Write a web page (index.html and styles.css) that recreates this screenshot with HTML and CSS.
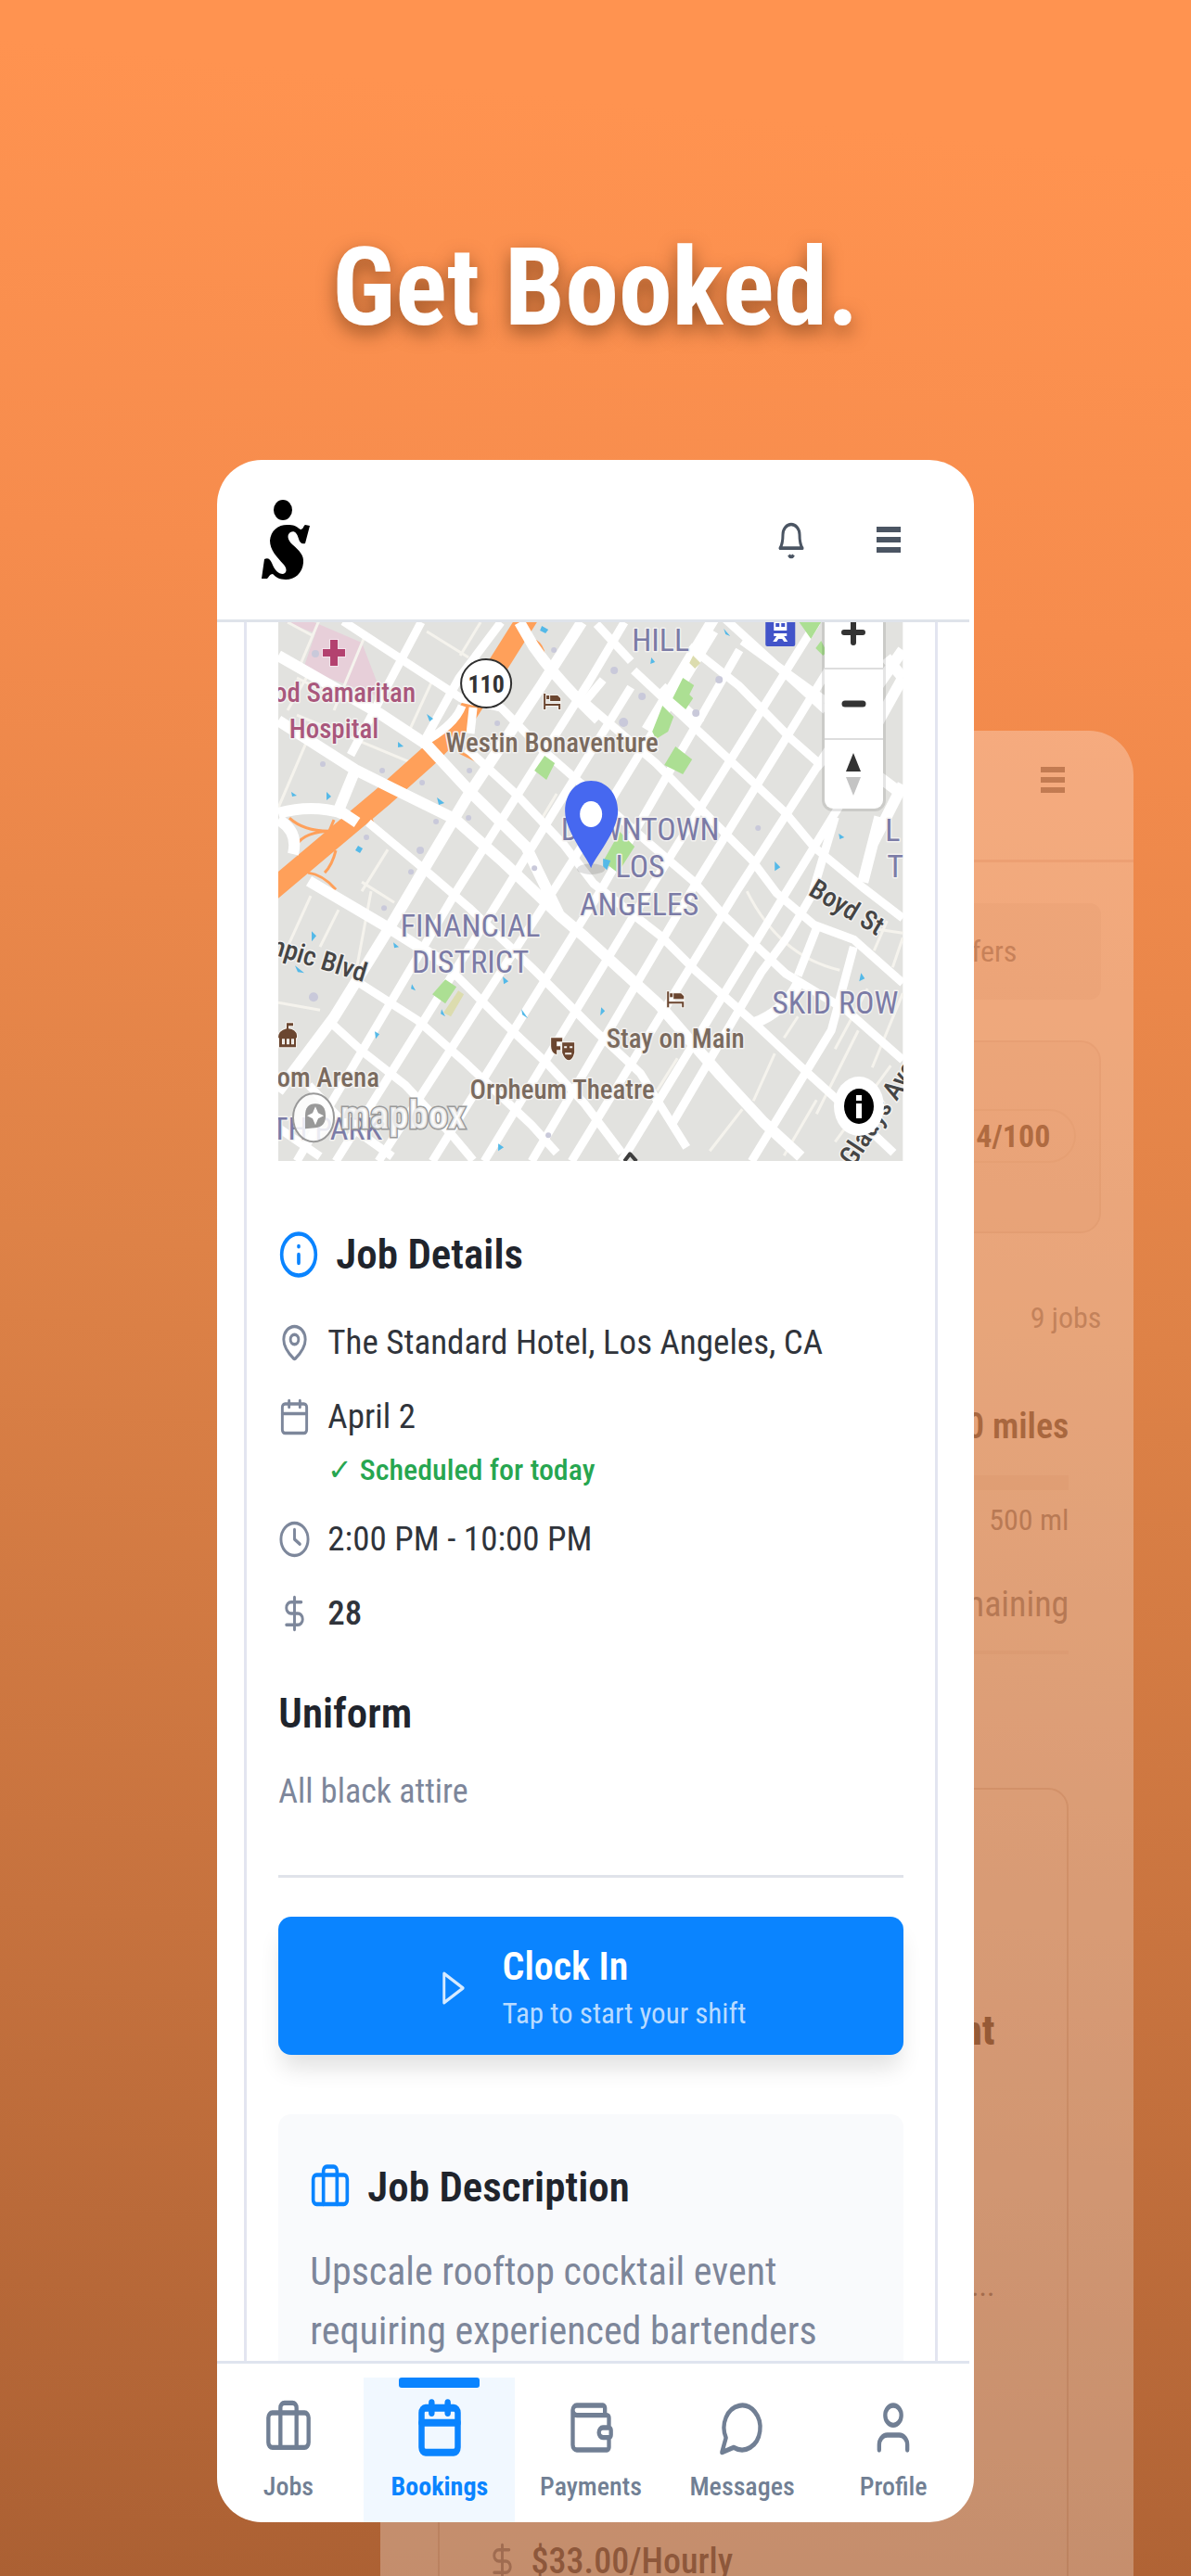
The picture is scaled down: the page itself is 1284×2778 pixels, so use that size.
FILE: index.html
```html
<!DOCTYPE html>
<html lang="en">
<head>
<meta charset="utf-8">
<meta name="viewport" content="width=device-width, initial-scale=1">
<title>Get Booked.</title>
<link rel="stylesheet" href="styles.css">
</head>
<body>
<svg class="defs" aria-hidden="true">
  <symbol id="i-briefcase" viewBox="0 0 24 24" preserveAspectRatio="none"><path d="M16 20V4a2 2 0 0 0-2-2h-4a2 2 0 0 0-2 2v16"/><rect x="2" y="6" width="20" height="14" rx="2"/></symbol>
  <symbol id="i-calendar" viewBox="0 0 24 24" preserveAspectRatio="none"><path d="M8 2v4M16 2v4M3 10h18"/><rect x="3" y="4" width="18" height="18" rx="2"/></symbol>
  <symbol id="i-dollar" viewBox="0 0 24 24" preserveAspectRatio="none"><path d="M12 2v20M17 5H9.500a3.500 3.500 0 0 0 0 7h5a3.500 3.500 0 0 1 0 7H6"/></symbol>
</svg>

<main class="promo">
  <h1 class="promo-title">Get Booked.</h1>

  <section class="back-screen" aria-hidden="true">
    <div class="back-header"><span class="bars"><i></i><i></i><i></i></span></div>
    <div class="back-body">
      <div class="back-tab">Offers</div>
      <div class="back-box"><span class="back-pill">14/100</span></div>
      <p class="back-count">9 jobs</p>
      <div class="back-range">
        <p class="back-strong">50 miles</p>
        <div class="back-track"></div>
        <p class="back-max">500 ml</p>
        <p class="back-left">remaining</p>
        <div class="back-rule"></div>
        <div class="back-job">
          <p class="back-job-title">Event</p>
          <p class="back-job-note">Downtown venue...</p>
          <p class="back-job-rate"><svg class="icon icon-md"><use href="#i-dollar"/></svg><span>$33.00/Hourly</span></p>
        </div>
      </div>
    </div>
  </section>

  <section class="phone">
    <div class="screen">
      <header class="top-bar">
        <a class="logo" href="#" aria-label="Home">
          <svg width="52" height="88" viewBox="0 0 52 88"><ellipse cx="23" cy="12" rx="10" ry="11"/><path d="M52 29L47 48C43 49 41 47 40 43C38 36 35 34 31 36C27 39 28 44 33 49C41 56 46 61 45 69C44 80 36 87 26 87C19 87 15 84 12 81C9 81 8 84 6 86H0L3 65C7 63 9 65 11 69C14 77 18 81 23 81C27 80 28 76 24 71C16 62 9 55 9 45C10 33 19 27 30 28C36 28 39 31 42 33C45 33 45 29 47 28Z"/></svg>
        </a>
        <div class="top-actions">
          <button class="plain" type="button" aria-label="Notifications"><svg class="bell" viewBox="0 0 24 24" preserveAspectRatio="none"><path d="M10.300 21a1.940 1.940 0 0 0 3.400 0M4 17h16c-1.500-2-2-4-2-8a6 6 0 0 0-12 0c0 4-.5 6-2 8z"/></svg></button>
          <button class="plain" type="button" aria-label="Menu"><span class="bars"><i></i><i></i><i></i></span></button>
        </div>
      </header>

      <div class="content">
        <article class="booking">
          <div class="map">
            <svg class="map-art" viewBox="0 0 673 581" role="img" aria-label="Map of downtown Los Angeles">
              <rect width="673" height="581" fill="#e2e2df"/>
              <path d="M8 0L40 12L27 50L113 82L90 22L34 -2z" fill="#e7cfd9"/>
              <g class="minor">
                <path d="M10 0L36 14M44 -2L22 50M92 18L60 95M36 50L10 95M160 10L205 38M218 0L196 36M165 65L142 115M60 80L20 60M20 100L145 152M30 130L0 200M118 245L90 290M100 290L85 370M35 295L10 350M90 280L125 302M65 310L45 350M0 410L45 418M300 185L282 215"/>
                <path d="M505 290Q540 360 605 375M640 330L673 335M656 322L642 354M560 425L545 448M535 465L512 516M500 525L465 570M635 395L600 460M625 440L580 530M673 400L640 480M660 478L600 560M545 575L580 515M673 340L662 372M430 470L408 505"/>
              </g>
              <g class="freeway">
                <path class="ramp" d="M12 211Q28 226 58 225M20 240Q28 226 58 225M60 213L55 225M62 246Q58 262 50 270M32 270Q48 272 62 288M100 212L104 222M195 140L217 151M277 20Q285 25 286 35"/>
                <path class="trunk" d="M-8 290L113 188L162 144L196 110L218 76L272 -10"/>
              </g>
              <g class="road">
                <path d="M343 2L380 42M443 26L497 69L553 126L587 156M383 52L430 96L490 152L547 206L577 242L630 286L673 319M330 86L407 152L460 206L510 256L537 292L577 326L620 342L673 389"/>
                <path d="M70 -1L197 82L240 92L283 136L340 186L397 236L447 279L480 316L547 379L613 419L673 472M203 136L257 186L307 239L340 282L413 339L450 376L513 432L563 479L607 519L663 572"/>
                <path class="wide" d="M0 36L110 99L160 132L210 186L267 242L303 316M0 106L83 159L123 179L190 212L243 259L303 316L330 339L410 412L477 489L523 539L563 576"/>
                <path d="M97 216L157 266L207 309L277 376L340 439L390 486L440 566M177 366L237 426L290 476L330 519L370 572M83 386L150 429L203 476L273 542L300 572M57 432L90 462L137 499L190 556L210 580M33 499L67 536L123 576M0 545L45 576M350 62L330 86M210 92L207 120"/>
                <path class="wide" d="M33 279L123 332L177 366M0 506L60 426L120 329L163 256L203 189L283 69L327 0M260 0L275 26Q300 62 345 105M0 206Q35 196 70 206L85 216M0 213Q22 225 16 250M83 159L62 210"/>
                <path d="M154 0L78 143M240 0L195 60L155 132M198 90Q190 112 152 132M20 581L192 290L335 64L373 0M62 581L244 290L380 70M108 581L296 290L350 206L470 10M166 581L347 290L497 30M222 581L399 290L520 96L580 0M273 581L445 290L560 104L597 44M316 581L494 290L600 126M370 581L548 290L625 165M425 540L520 378L548 340L575 294L600 210M510 581L596 440L620 350M560 381L580 330"/>
                <path class="wide" d="M397 116L470 -5M413 70L455 110M560 390Q545 420 513 432M673 30L645 70M645 165L673 186M655 38L673 60M645 110L673 60M630 280L648 210M673 175L640 240"/>
                <path d="M480 -5L590 95M500 20L590 85"/>
              </g>
              <g fill="#acdf93"><path d="M287 144l11 8-9 18-13-10zM436 60l12 8-5 10 4 4-8 12-14-12zM414 90l12 12-6 16-13 8-4-8zM428 134l18 14-10 16-20-10zM368 226l16 16-18 28-16-12zM560 -2h26l-12 20zM585 20l6 12-4 4-8-8zM180 385l12 8-12 18-14-10z"/></g>
              <g fill="#dcdcae"><path d="M194 397l6 4-14 24-8-4zM447 36l8 8-6 6-6-6z"/></g>
              <g fill="#54b9e8"><path d="M284 4l7 4-3 4-6-3zM160 99l7 5-4 3zM129 129l6 5-6 1zM171 189l8 6-6 2zM52 183l5 5-5 4zM86 241l5 3-3 5-5-3zM14 183l6 4-5 1zM535 258l6 6-6 4zM604 228l6 4-5 2zM628 378l4 6-6 3zM402 38l4 5-5 2zM480 7l7 8-5-2zM350 255l8 2-4 10-4-4zM36 333l5 5-5 6zM18 370l10 8-7-1zM124 345l6 5-5 1zM144 390l4 7-5-2zM242 382l6 5-5 3zM262 417l7 10-6-4zM104 441l5 3-4 5zM237 562l6 4-6 4zM348 415l4 4-5 5zM435 392l6 6zM176 417l4 8-5-3z"/></g>
              <g fill="#c9c9da"><circle cx="40" cy="34" r="4"/><circle cx="112" cy="160" r="3"/><circle cx="48" cy="153" r="3"/><circle cx="155" cy="173" r="3"/><circle cx="206" cy="160" r="3"/><circle cx="236" cy="109" r="3"/><circle cx="297" cy="30" r="3"/><circle cx="170" cy="215" r="3"/><circle cx="205" cy="211" r="3"/><circle cx="153" cy="246" r="4"/><circle cx="143" cy="269" r="3"/><circle cx="276" cy="265" r="3"/><circle cx="95" cy="232" r="3"/><circle cx="475" cy="62" r="4"/><circle cx="362" cy="52" r="4"/><circle cx="392" cy="80" r="4"/><circle cx="372" cy="108" r="5"/><circle cx="450" cy="98" r="4"/><circle cx="517" cy="222" r="3"/><circle cx="291" cy="553" r="3"/><circle cx="114" cy="308" r="3"/><circle cx="38" cy="404" r="5"/></g>

              <rect x="525" y="-6" width="32" height="32" rx="2" fill="#4254c9"/>
              <path d="M534 -4h14v13h-14zM534 12h14v3h-3l4 6h-4l-2-3h-4l-2 3h-4l4-6h-3z" fill="#fff"/><path d="M536 1h4v4h-4zM542 1h4v4h-4z" fill="#4254c9"/>
              <path d="M56 19h8v10h8v8h-8v10h-8V37h-8v-8h8z" fill="#b3416f" stroke="#f4e4ec" stroke-width="2" paint-order="stroke"/>
              <ellipse cx="224" cy="66" rx="27" ry="26" fill="#fff" stroke="#2f2f2f" stroke-width="2"/>
              <text x="224" y="76" class="shield">110</text>
              <g class="poi">
                <path d="M286 77h2v11h16v-6l-3-3h-8v6h11v9h-2v-4h-14v4h-2zM289 79h3v4h-3z"/>
                <path d="M419 398h2v11h16v-6l-3-3h-8v6h11v9h-2v-4h-14v4h-2zM422 400h3v4h-3z"/>
                <path d="M294 448h12v4h-6v5h4v4h-4v5q-6-2-6-9zM306 453h13v11q-2 8-6 8t-7-8zM308 457v2h3v-2zM314 457v2h3v-2zM309 464v2h7v-2z" fill-rule="evenodd"/>
                <path d="M9 432h7v3h-5v3q8 1 9 7v3h-1v10H1V448H0q0-8 9-10zM4 449v6h3v-6zM9 449v6h3v-6zM14 449v6h3v-6z" fill-rule="evenodd"/>
              </g>
              <g class="hospital"><text x="148" y="86" text-anchor="end">Good Samaritan</text><text x="60" y="125" text-anchor="middle">Hospital</text></g>
              <g class="place">
                <text x="295" y="140" text-anchor="middle">Westin Bonaventure</text>
                <text x="428" y="459" text-anchor="middle">Stay on Main</text>
                <text x="306" y="514" text-anchor="middle">Orpheum Theatre</text>
                <text x="109" y="501" text-anchor="end">Crypto.com Arena</text>
              </g>
              <g class="district">
                <text x="412" y="31" text-anchor="middle">HILL</text>
                <text x="390" y="235" text-anchor="middle">DOWNTOWN</text>
                <text x="390" y="275" text-anchor="middle">LOS</text>
                <text x="389" y="316" text-anchor="middle">ANGELES</text>
                <text x="207" y="339" text-anchor="middle">FINANCIAL</text>
                <text x="207" y="378" text-anchor="middle">DISTRICT</text>
                <text x="600" y="422" text-anchor="middle">SKID ROW</text>
                <text x="654" y="236">L</text>
                <text x="656" y="275">T</text>
                <text x="112" y="558" text-anchor="end">TH PARK</text>
              </g>
              <g class="street">
                <text transform="translate(570 293) rotate(31)">Boyd St</text>
                <text transform="translate(92 388) rotate(17)" text-anchor="end">Olympic Blvd</text>
                <text transform="translate(620 588) rotate(-57)">Gladys Ave</text>
                <path d="M373 581l6-8 7 8" fill="none" stroke="#3d3d3d" stroke-width="4"/>
              </g>
              <ellipse cx="337" cy="266" rx="15" ry="6" fill="#000" opacity=".12"/>
              <path d="M337 265C333 254 309 225 309 204C309 184 321 171 337 171S366 184 366 204C366 225 341 254 337 265Z" fill="#4668f0"/>
              <ellipse cx="337" cy="207" rx="12" ry="14" fill="#fff"/>
              <g class="mapbox">
                <ellipse cx="38" cy="534" rx="22" ry="26" fill="#fff" fill-opacity=".85" stroke="#999" stroke-width="2"/>
                <path d="M29 546V532q0-13 11-13t11 13q0 12-11 13z" fill="#999"/><path d="M40 522l3 7 6 3-6 3-3 7-3-7-6-3 6-3z" fill="#fff"/>
                <text x="67" y="546">mapbox</text>
              </g>
            </svg>
            <div class="map-controls">
              <button type="button" aria-label="Zoom in"><svg width="28" height="28" viewBox="0 0 28 28"><path d="M14 3v22M4 14h20" stroke="#333" stroke-width="6" stroke-linecap="round"/></svg></button>
              <button type="button" aria-label="Zoom out"><svg width="28" height="28" viewBox="0 0 28 28"><path d="M5 14h19" stroke="#333" stroke-width="7" stroke-linecap="round"/></svg></button>
              <button type="button" aria-label="Reset bearing"><svg width="28" height="48" viewBox="0 0 28 48"><path d="M14 1l8 20H6z" fill="#333"/><path d="M14 47l8-20H6z" fill="#c4c4c4"/></svg></button>
            </div>
            <button class="map-info" type="button" aria-label="Attribution"><svg width="54" height="64" viewBox="0 0 54 64"><ellipse cx="27" cy="32" rx="27" ry="32" fill="#fff"/><ellipse cx="27" cy="32" rx="16" ry="19" fill="#000"/><path d="M24 20h6v6h-6zM24 29h6v16h-6z" fill="#fff"/></svg></button>
          </div>

          <h2 class="heading details-heading">
            <svg class="icon icon-lg accent" viewBox="0 0 24 24" preserveAspectRatio="none"><circle cx="12" cy="12" r="10"/><path d="M12 16v-4M12 8v.1"/></svg>
            Job Details
          </h2>
          <ul class="facts">
            <li><svg class="icon icon-md" viewBox="0 0 24 24" preserveAspectRatio="none"><path d="M20 10c0 5-5.500 10.200-7.400 11.800a1 1 0 0 1-1.200 0C9.500 20.200 4 15 4 10a8 8 0 0 1 16 0"/><circle cx="12" cy="10" r="3"/></svg><span>The Standard Hotel, Los Angeles, CA</span></li>
            <li><svg class="icon icon-md"><use href="#i-calendar"/></svg><div>April 2<p class="today">✓ Scheduled for today</p></div></li>
            <li><svg class="icon icon-md" viewBox="0 0 24 24" preserveAspectRatio="none"><circle cx="12" cy="12" r="10"/><path d="M12 6v6l4 3"/></svg><span>2:00 PM - 10:00 PM</span></li>
            <li><svg class="icon icon-md"><use href="#i-dollar"/></svg><span class="rate">28</span></li>
          </ul>

          <h2 class="heading uniform-heading">Uniform</h2>
          <p class="uniform">All black attire</p>
          <hr class="rule">

          <button class="clock-in" type="button">
            <svg class="icon icon-md" viewBox="0 0 24 24" preserveAspectRatio="none"><path d="M6 3l14 9-14 9z"/></svg>
            <span class="clock-text"><strong>Clock In</strong><small>Tap to start your shift</small></span>
          </button>

          <section class="description">
            <h2 class="heading"><svg class="icon icon-lg accent"><use href="#i-briefcase"/></svg>Job Description</h2>
            <p>Upscale rooftop cocktail event requiring experienced bartenders</p>
          </section>
        </article>
      </div>

      <nav class="tabs">
        <a href="#"><svg class="icon icon-xl"><use href="#i-briefcase"/></svg>Jobs</a>
        <a href="#" class="active" aria-current="page"><svg class="icon icon-xl"><use href="#i-calendar"/></svg>Bookings</a>
        <a href="#"><svg class="icon icon-xl" viewBox="0 0 24 24" preserveAspectRatio="none"><path d="M19 7V4a1 1 0 0 0-1-1H5a2 2 0 0 0 0 4h15a1 1 0 0 1 1 1v4h-3a2 2 0 0 0 0 4h3a1 1 0 0 0 1-1v-2a1 1 0 0 0-1-1M3 5v14a2 2 0 0 0 2 2h15a1 1 0 0 0 1-1v-4"/></svg>Payments</a>
        <a href="#"><svg class="icon icon-xl" viewBox="0 0 24 24" preserveAspectRatio="none"><path d="M7.900 20A9 9 0 1 0 4 16.100L2 22Z"/></svg>Messages</a>
        <a href="#"><svg class="icon icon-xl" viewBox="0 0 24 24" preserveAspectRatio="none"><path d="M19 21v-2a4 4 0 0 0-4-4H9a4 4 0 0 0-4 4v2"/><circle cx="12" cy="7" r="4"/></svg>Profile</a>
      </nav>
    </div>
  </section>
</main>
</body>
</html>
```
FILE: styles.css
```css
* { box-sizing: border-box; margin: 0; padding: 0; }

body {
  font-family: "Roboto Condensed", Roboto, sans-serif;
  font-size: 37px;
  line-height: 56px;
  color: #30343b;
  background: #c9753f;
}

button { font: inherit; color: inherit; border: 0; background: none; cursor: pointer; }
a { color: inherit; text-decoration: none; }
ul { list-style: none; }
.defs { display: none; }

.promo {
  position: relative;
  display: flex;
  flex-direction: column;
  align-items: center;
  min-height: 100vh;
  padding: 242px 0 60px;
  overflow: hidden;
  background: linear-gradient(186deg, #ff9350 6%, #f68c4d 24%, #de8247 50%, #c6723e 75%, #ab6033 100%);
}

.promo-title {
  font-size: 116px;
  line-height: 136px;
  font-weight: 700;
  color: #fff;
  text-shadow: 0 8px 20px rgba(60, 25, 0, .5);
  margin-bottom: 118px;
}

/* icons */
.icon { flex: none; fill: none; stroke: currentColor; stroke-width: 2; stroke-linecap: round; stroke-linejoin: round; color: #7d879b; }
.icon-md { width: 35px; height: 42px; }
.icon-lg { width: 44px; height: 54px; }
.icon-xl { width: 52px; height: 64px; color: inherit; }
.icon.accent { color: #0a84ff; }

.bars { display: grid; gap: 5px; width: 26px; }
.bars i { height: 6px; background: #4b5563; }

/* faded screen behind the main one */
.back-screen {
  position: absolute;
  top: 788px;
  right: 4.8%;
  bottom: 0;
  width: 63.3%;
  background: #fff;
  border-radius: 48px 48px 0 0;
  opacity: .28;
  text-align: right;
}
.back-header { display: flex; align-items: center; justify-content: flex-end; height: 142px; padding: 0 74px 33px 0; border-bottom: 3px solid #e9dedb; }
.back-body { padding: 44px 35px 0 62px; font-size: 32px; line-height: 46px; color: #6b7280; }
.back-tab { padding: 29px 91px 29px 0; border-radius: 12px; background: #f3f0ef; margin-bottom: 44px; }
.back-box { height: 208px; padding: 72px 25px 0 0; border: 2px solid #e9e2e0; border-radius: 22px; background: #f8f5f4; margin-bottom: 68px; }
.back-pill { display: inline-block; padding: 4px 26px; border: 2px solid #ece5e3; border-radius: 30px; font-size: 34px; font-weight: 700; color: #2a2a2e; }
.back-count { margin-bottom: 66px; color: #7d838f; }
.back-range { padding-right: 35px; }
.back-strong { font-size: 38px; line-height: 56px; font-weight: 600; color: #2a2a2e; }
.back-track { height: 16px; margin: 25px 0 9px; background: #f3f0ef; }
.back-left { font-size: 38px; line-height: 56px; margin: 40px 0 22px; }
.back-rule { height: 4px; background: #f3f0ef; margin-bottom: 144px; }
.back-job { height: 900px; padding: 232px 78px 0 50px; border: 2px solid #ddd4d1; border-radius: 22px 22px 0 0; }
.back-job-title { font-size: 44px; line-height: 56px; font-weight: 800; color: #1e2025; margin-bottom: 224px; }
.back-job-note { margin-bottom: 246px; }
.back-job-rate { display: flex; align-items: center; gap: 14px; font-size: 38px; line-height: 56px; font-weight: 500; color: #3a3e4d; }

/* main phone screen */
.phone {
  position: relative;
  width: 63.5%;
  overflow: hidden;
  border-radius: 48px;
  background: #fff;
}
.screen { margin: 0 5px 0 -5px; }

.top-bar {
  display: flex;
  align-items: center;
  justify-content: space-between;
  height: 175px;
  padding: 0 74px 0 53px;
  border-bottom: 3px solid #dfe3ea;
}
.logo { display: flex; }
.top-actions { display: flex; align-items: center; gap: 74px; }
.plain { display: flex; }
.bell { width: 36px; height: 44px; fill: none; stroke: #4b5563; stroke-width: 2; stroke-linejoin: round; }

.content { padding: 0 34px; }
.booking { padding: 0 34px; border: 3px solid #e3e5f0; border-width: 0 3px; }

/* map */
.map { position: relative; overflow: hidden; }
.map-art { display: block; width: 100%; height: auto; }
.minor { fill: none; stroke: #f5f3ed; stroke-width: 3; }
.road { fill: none; stroke: #fff; stroke-width: 9; stroke-linejoin: round; }
.road .wide { stroke-width: 12; }
.freeway { fill: none; stroke: #ffa05a; }
.freeway .ramp { stroke-width: 3; }
.freeway .trunk { stroke-width: 22; stroke-linejoin: round; }
.map-art text { font-family: "Roboto Condensed", Roboto, sans-serif; }
.shield { font-size: 26px; font-weight: 700; fill: #333; text-anchor: middle; }
.poi { fill: #6b4630; stroke: #f6f3ef; stroke-width: 2; paint-order: stroke; }
.hospital, .place, .district, .street { font-size: 29px; font-weight: 500; stroke: #f2f1ef; stroke-width: 3; paint-order: stroke; stroke-linejoin: round; }
.hospital { fill: #a9577c; }
.place { fill: #7a6a5e; }
.map-art .district { font-size: 34px; font-weight: 400; fill: #7b7ba6; }
.street { fill: #454545; }
.mapbox text { font-size: 43px; font-weight: 700; fill: #fff; fill-opacity: .8; stroke: #999; stroke-width: 3; paint-order: stroke; }

.map-controls {
  position: absolute;
  top: -27px;
  right: 22px;
  width: 63px;
  border-radius: 9px;
  background: #fff;
  box-shadow: 0 0 0 3px rgba(0, 0, 0, .1);
}
.map-controls button { display: flex; align-items: center; justify-content: center; width: 100%; height: 76px; }
.map-controls button + button { border-top: 2px solid #ddd; }
.map-info { position: absolute; right: 21px; bottom: 27px; display: flex; }

/* job details */
.heading { display: flex; align-items: center; gap: 18px; font-size: 45px; line-height: 56px; font-weight: 600; color: #20242c; }
.details-heading { margin-top: 73px; }
.facts { display: grid; gap: 24px; margin-top: 39px; }
.facts li { display: flex; gap: 18px; }
.facts .icon { margin-top: 7px; }
.today { margin-top: 6px; font-size: 32px; line-height: 46px; font-weight: 500; color: #27a650; }
.rate { font-weight: 500; }
.uniform-heading { margin-top: 52px; }
.uniform { margin-top: 28px; font-size: 36px; color: #7d869a; }
.rule { height: 3px; margin: 62px 0 42px; border: 0; background: #e0e3ea; }

.clock-in {
  display: flex;
  align-items: center;
  justify-content: center;
  gap: 37px;
  width: 100%;
  padding: 26px 0 21px;
  border-radius: 14px;
  color: #fff;
  background: #0a84ff;
  box-shadow: 0 18px 24px -4px rgba(0, 0, 0, .12);
  text-align: left;
}
.clock-in .icon { color: #d6eaff; }
.clock-text strong { display: block; font-size: 42px; line-height: 56px; font-weight: 600; }
.clock-text small { display: block; font-size: 31px; line-height: 46px; color: #b9dbff; }

.description { margin-top: 64px; padding: 51px 34px 0; border-radius: 14px 14px 0 0; background: #f9fafc; }
.description p { margin-top: 31px; font-size: 42px; line-height: 64px; color: #7d869a; }

/* bottom navigation */
.tabs { display: grid; grid-template-columns: repeat(5, 1fr); padding-top: 15px; border-top: 3px solid #dfe4ef; }
.tabs a {
  position: relative;
  display: flex;
  flex-direction: column;
  align-items: center;
  gap: 12px;
  padding: 22px 0 18px;
  font-size: 28px;
  line-height: 40px;
  font-weight: 500;
  color: #717f94;
}
.tabs .active { font-weight: 700; color: #0a84ff; background: #f1f8ff; }
.tabs .active .icon { stroke-width: 3; }
.tabs .active::before {
  content: "";
  position: absolute;
  top: 0;
  width: 87px;
  height: 11px;
  border-radius: 3px;
  background: #0a84ff;
}
```
